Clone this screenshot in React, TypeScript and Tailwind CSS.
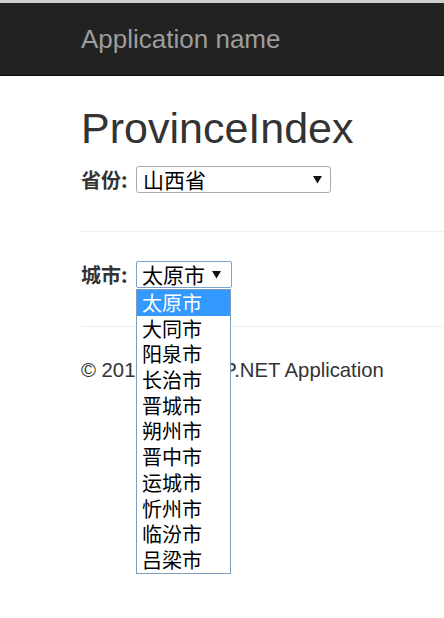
const cities = [
  '太原市',
  '大同市',
  '阳泉市',
  '长治市',
  '晋城市',
  '朔州市',
  '晋中市',
  '运城市',
  '忻州市',
  '临汾市',
  '吕梁市',
];

function Arrow() {
  return (
    <svg width="9" height="9" viewBox="0 0 9 9" className="shrink-0">
      <path d="M0 1h9L4.5 8.5z" fill="#111" />
    </svg>
  );
}

function App() {
  return (
    <div className="min-h-[618px] w-[444px] overflow-hidden bg-white text-[#333] font-['Liberation_Sans','Noto_Sans_CJK_SC',sans-serif]">
      <div className="h-[3px] bg-[#cfcfcf]" />
      <nav className="h-[73px] bg-[#222] border-b border-[#080808] flex items-center pl-[81px]">
        <span className="text-[26px] text-[#9d9d9d]">Application name</span>
      </nav>

      <main className="pl-[81px]">
        <h2 className="mt-[29px] text-[43px] leading-[47px] text-[#333]">
          ProvinceIndex
        </h2>

        <div className="mt-[14px] flex items-center h-[27px]">
          <label className="w-[55px] font-bold text-[20px] font-['Noto_Sans_CJK_SC',sans-serif]">
            省份:
          </label>
          <div className="w-[195px] h-[27px] border border-[#a9a9a9] rounded-[3px] flex items-center justify-between pl-[6px] pr-[8px] text-[21px] text-black font-['Noto_Sans_CJK_SC',sans-serif]">
            <span className="leading-none">山西省</span>
            <Arrow />
          </div>
        </div>

        <hr className="mt-[38px] border-t border-[#eee] -mr-[40px]" />

        <div className="mt-[29px] flex items-center h-[27px]">
          <label className="w-[55px] font-bold text-[20px] font-['Noto_Sans_CJK_SC',sans-serif]">
            城市:
          </label>
          <div className="relative">
            <div className="w-[96px] h-[27px] border border-[#7da2ce] rounded-[2px] flex items-center justify-between pl-[5px] pr-[10px] text-[21px] text-black font-['Noto_Sans_CJK_SC',sans-serif]">
              <span className="leading-none">太原市</span>
              <Arrow />
            </div>
            <ul className="absolute left-0 top-[28px] w-[95px] bg-white border border-[#7f9db9] z-10 font-['Noto_Sans_CJK_SC',sans-serif] text-[20px] text-black">
              {cities.map((c, i) => (
                <li
                  key={c}
                  className={
                    i === 0
                      ? 'h-[25.7px] leading-[25.7px] pl-[5px] bg-[#3399ff] text-white'
                      : 'h-[25.7px] leading-[25.7px] pl-[5px]'
                  }
                >
                  {c}
                </li>
              ))}
            </ul>
          </div>
        </div>

        <hr className="mt-[38px] border-t border-[#eee] -mr-[40px]" />

        <footer className="mt-[29px] text-[20.3px] leading-[28.6px]">
          © 2016 - My ASP.NET Application
        </footer>
      </main>
    </div>
  );
}

export default App;
